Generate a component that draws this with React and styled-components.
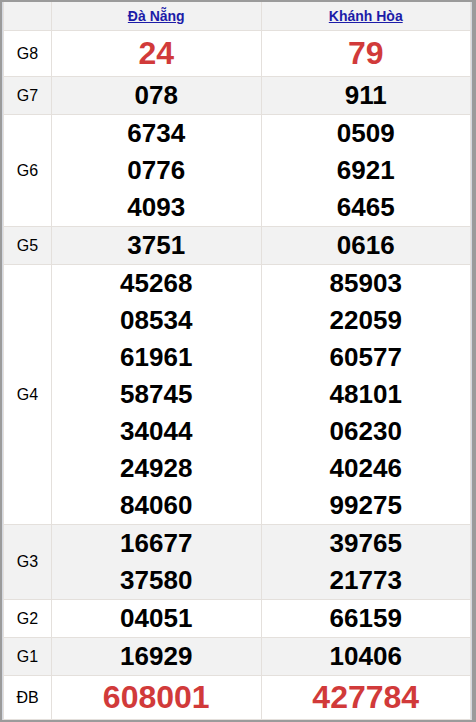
import React from "react";
import styled, { createGlobalStyle } from "styled-components";

const rows = [
  { label: "G8", a: ["24"], b: ["79"], big: true },
  { label: "G7", a: ["078"], b: ["911"] },
  { label: "G6", a: ["6734", "0776", "4093"], b: ["0509", "6921", "6465"] },
  { label: "G5", a: ["3751"], b: ["0616"] },
  {
    label: "G4",
    a: ["45268", "08534", "61961", "58745", "34044", "24928", "84060"],
    b: ["85903", "22059", "60577", "48101", "06230", "40246", "99275"],
  },
  { label: "G3", a: ["16677", "37580"], b: ["39765", "21773"] },
  { label: "G2", a: ["04051"], b: ["66159"] },
  { label: "G1", a: ["16929"], b: ["10406"] },
  { label: "ĐB", a: ["608001"], b: ["427784"], big: true, last: true },
];

const App = () => {
  return (
    <>
      <GlobalStyle />
      <Frame>
        <Table>
          <colgroup>
            <col style={{ width: 48 }} />
            <col />
            <col />
          </colgroup>
          <thead>
            <HeadRow>
              <HeadCell />
              <HeadCell>
                <ProvinceLink href="#">Đà Nẵng</ProvinceLink>
              </HeadCell>
              <HeadCell>
                <ProvinceLink href="#">Khánh Hòa</ProvinceLink>
              </HeadCell>
            </HeadRow>
          </thead>
          <tbody>
            {rows.map((r, i) => (
              <Row key={r.label} $shaded={i % 2 === 1}>
                <Label>{r.label}</Label>
                <NumCell>
                  {r.a.map((n) => (
                    <Num key={n} $big={r.big} $last={r.last}>{n}</Num>
                  ))}
                </NumCell>
                <NumCell>
                  {r.b.map((n) => (
                    <Num key={n} $big={r.big} $last={r.last}>{n}</Num>
                  ))}
                </NumCell>
              </Row>
            ))}
          </tbody>
        </Table>
      </Frame>
    </>
  );
};

const GlobalStyle = createGlobalStyle`
  html, body {
    margin: 0;
    padding: 0;
    background: #fff;
    font-family: "Liberation Sans", Arial, sans-serif;
  }
`;

const Frame = styled.div`
  box-sizing: border-box;
  width: 476px;
  height: 722px;
  border-top: 2px solid #9b9b9b;
  border-bottom: 2px solid #9b9b9b;
  border-left: 2px solid #9b9b9b;
  border-right: 4px solid #9b9b9b;
  padding: 0 1px 0 1px;
  background: #fff;
  box-shadow: inset 1px 0 0 #d4d8e0, inset -1px 0 0 #d4d8e0;
  overflow: hidden;
`;

const Table = styled.table`
  width: 100%;
  border-collapse: collapse;
  table-layout: fixed;
  border: 1px solid #e4e0dc;
  border-top: none;
`;

const HeadRow = styled.tr`
  background: #f2f2f2;
`;

const HeadCell = styled.th`
  height: 28px;
  padding: 0;
  border: 1px solid #e4e0dc;
  border-top: none;
  text-align: center;
  vertical-align: middle;
`;

const ProvinceLink = styled.a`
  font-size: 14px;
  font-weight: bold;
  color: #1c1ca8;
  text-decoration: underline;
`;

const Row = styled.tr`
  background: ${(p) => (p.$shaded ? "#f2f2f2" : "#fff")};
`;

const Label = styled.td`
  padding: 0;
  border: 1px solid #e4e0dc;
  text-align: center;
  vertical-align: middle;
  font-size: 16px;
  color: #000;
`;

const NumCell = styled.td`
  padding: 0;
  border: 1px solid #e4e0dc;
  text-align: center;
  vertical-align: middle;
`;

const Num = styled.div`
  font-size: ${(p) => (p.$big ? "32px" : "26px")};
  line-height: ${(p) => (p.$big ? (p.$last ? "43px" : "45px") : "37px")};
  font-weight: bold;
  color: ${(p) => (p.$big ? "#d13a3a" : "#000")};
`;

export default App;
